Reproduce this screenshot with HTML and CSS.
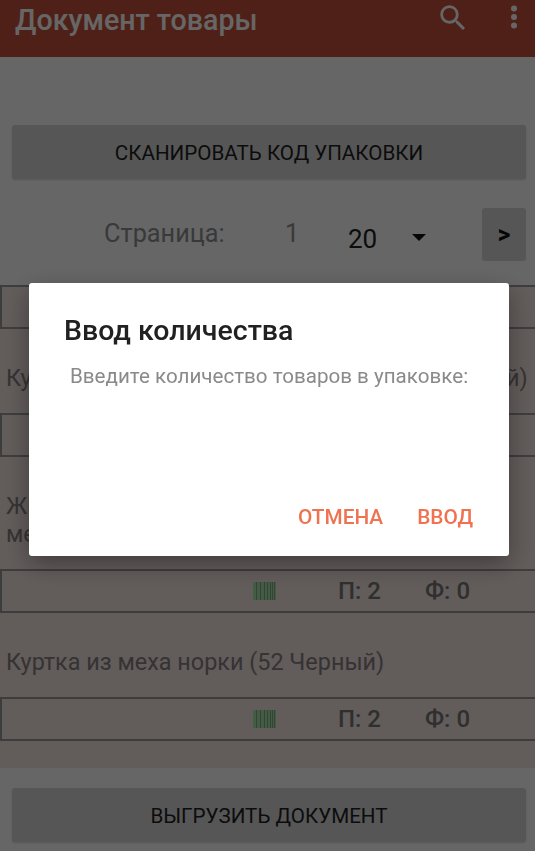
FILE: index.html
```html
<!DOCTYPE html>
<html lang="ru">
<head>
    <meta charset="UTF-8">
    <meta name="viewport" content="width=device-width, initial-scale=1.0">
    <title>Документ товары</title>
    <link rel="stylesheet" href="styles.css">
</head>
<body>
    <div class="page">
        <header class="appbar">
            <h1 class="appbar-title">Документ товары</h1>
            <svg class="icon-search" viewBox="0 0 24 24" width="34" height="34"><path d="M15.5 14h-.79l-.28-.27A6.47 6.47 0 0 0 16 9.500 6.500 6.500 0 1 0 9.500 16c1.610 0 3.090-.59 4.230-1.570l.27.28v.79l5 4.990L20.490 19l-4.990-5zm-6 0C7.010 14 5 11.990 5 9.500S7.010 5 9.500 5 14 7.010 14 9.500 11.990 14 9.500 14z"/></svg>
            <svg class="icon-more" viewBox="0 0 8 24" width="8" height="24"><circle cx="4" cy="3.500" r="3"/><circle cx="4" cy="12" r="3"/><circle cx="4" cy="20.500" r="3"/></svg>
        </header>

        <div class="top-action">
            <button class="btn">СКАНИРОВАТЬ КОД УПАКОВКИ</button>
        </div>

        <div class="pager">
            <span class="pager-label">Страница:</span>
            <span class="pager-num">1</span>
            <span class="pager-size">20</span>
            <span class="pager-arrow"></span>
            <button class="btn btn-next">&gt;</button>
        </div>

        <div class="list">
            <div class="count-row">
                <svg class="barcode" viewBox="0 0 23 18" width="23" height="18"><use href="#bars"/></svg>
                <span class="count">П: 2</span>
                <span class="count">Ф: 0</span>
            </div>
            <p class="item-name">Куртка из меха норки с отделками (52 Черный)</p>
            <div class="count-row">
                <svg class="barcode" viewBox="0 0 23 18" width="23" height="18"><use href="#bars"/></svg>
                <span class="count">П: 2</span>
                <span class="count">Ф: 0</span>
            </div>
            <p class="item-name">Жилет из меха норки с капюшоном,<br>мех лисы</p>
            <div class="count-row">
                <svg class="barcode" viewBox="0 0 23 18" width="23" height="18"><use href="#bars"/></svg>
                <span class="count">П: 2</span>
                <span class="count">Ф: 0</span>
            </div>
            <p class="item-name">Куртка из меха норки (52 Черный)</p>
            <div class="count-row">
                <svg class="barcode" viewBox="0 0 23 18" width="23" height="18"><use href="#bars"/></svg>
                <span class="count">П: 2</span>
                <span class="count">Ф: 0</span>
            </div>
        </div>

        <div class="bottom-action">
            <button class="btn">ВЫГРУЗИТЬ ДОКУМЕНТ</button>
        </div>
    </div>

    <svg class="defs" width="0" height="0">
        <g id="bars">
            <rect width="23" height="18" fill="#a9e6ab"/>
            <g fill="#8aa88f">
                <rect x="3" width="1" height="18"/>
                <rect x="7" width="1" height="18"/>
                <rect x="11" width="1" height="18"/>
                <rect x="14" width="1" height="18"/>
                <rect x="17" width="1" height="18"/>
                <rect x="19" width="1" height="18"/>
                <rect x="21" width="1" height="18"/>
            </g>
        </g>
    </svg>

    <div class="scrim">
        <div class="dialog">
            <h2 class="dialog-title">Ввод количества</h2>
            <p class="dialog-text">Введите количество товаров в упаковке:</p>
            <div class="dialog-actions">
                <button class="dialog-btn">ОТМЕНА</button>
                <button class="dialog-btn">ВВОД</button>
            </div>
        </div>
    </div>
</body>
</html>
```

FILE: styles.css
```css
body {
    margin: 0;
    font-family: Roboto, "Noto Sans", sans-serif;
    background-color: #fff;
}

.page {
    height: 851px;
    overflow: hidden;
    display: flex;
    flex-direction: column;
}

.appbar {
    height: 57px;
    flex-shrink: 0;
    display: flex;
    background: #c6523a;
    color: #fff;
}

.appbar-title {
    margin: 0 0 0 15px;
    flex: 1;
    font-size: 28.6px;
    font-weight: 500;
    line-height: 40px;
}

.icon-search {
    margin: 1px 40px 0 0;
    fill: #fff;
}

.icon-more {
    margin: 5px 17px 0 0;
    fill: #fff;
}

.defs {
    display: block;
    height: 0;
}

.btn {
    display: block;
    width: 100%;
    height: 54px;
    padding: 1px 0 0;
    border: none;
    border-radius: 3px;
    background: #d6d6d6;
    color: #1f1f1f;
    font-family: inherit;
    font-size: 20.6px;
    box-shadow: 0 1px 2px rgba(0, 0, 0, 0.15);
}

.top-action {
    padding: 68px 9px 0 12px;
}

.pager {
    height: 54px;
    margin-top: 28px;
    padding-right: 9px;
    display: flex;
    align-items: center;
}

.pager-label {
    margin-left: 104px;
    width: 181px;
    font-size: 25.3px;
    color: #8f8f8f;
    position: relative;
    top: -1px;
}

.pager-num {
    width: 63px;
    font-size: 25.3px;
    color: #8f8f8f;
    position: relative;
    top: -1px;
}

.pager-size {
    width: 64px;
    font-size: 26px;
    color: #222;
    position: relative;
    top: 5px;
}

.pager-arrow {
    width: 0;
    height: 0;
    border-left: 7px solid transparent;
    border-right: 7px solid transparent;
    border-top: 7px solid #111;
    position: relative;
    top: 3px;
}

.btn-next {
    width: 44px;
    height: 53px;
    margin-left: auto;
    font-size: 25px;
    font-weight: 700;
    color: #111;
    box-shadow: none;
}

.list {
    height: 483px;
    margin-top: 24px;
    flex-shrink: 0;
    background: #f5e5e3;
    overflow: hidden;
}

.count-row {
    height: 44px;
    box-sizing: border-box;
    border: 2px solid #9c9898;
    border-right: none;
    display: flex;
    align-items: center;
    padding-left: 251px;
}

.barcode {
    margin-right: 62px;
}

.count {
    width: 87px;
    font-size: 24px;
    font-weight: 500;
    color: #777;
}

.item-name {
    margin: 0;
    padding: 35px 6px 21px;
    font-size: 23.4px;
    line-height: 28px;
    color: #858080;
}

.bottom-action {
    padding: 20px 9px 0 12px;
}

.scrim {
    position: fixed;
    inset: 0;
    padding: 0 0 13px 3px;
    background: rgba(0, 0, 0, 0.6);
    display: flex;
    align-items: center;
    justify-content: center;
}

.dialog {
    width: 480px;
    height: 273px;
    box-sizing: border-box;
    padding: 31px 36px 0 35px;
    background: #fff;
    border-radius: 3px;
    display: flex;
    flex-direction: column;
    box-shadow: 0 8px 24px rgba(0, 0, 0, 0.35);
}

.dialog-title {
    margin: 0;
    font-size: 28.5px;
    font-weight: 500;
    line-height: 34px;
    color: #212121;
}

.dialog-text {
    margin: 15px 0 0 6px;
    font-size: 20.6px;
    line-height: 26px;
    color: #8a8a8a;
    white-space: nowrap;
}

.dialog-actions {
    margin-top: auto;
    height: 58px;
    display: flex;
    justify-content: flex-end;
    gap: 34px;
}

.dialog-btn {
    height: 38px;
    padding: 0;
    border: none;
    background: none;
    font-family: inherit;
    font-size: 20.8px;
    font-weight: 500;
    color: #ef7350;
}
```
